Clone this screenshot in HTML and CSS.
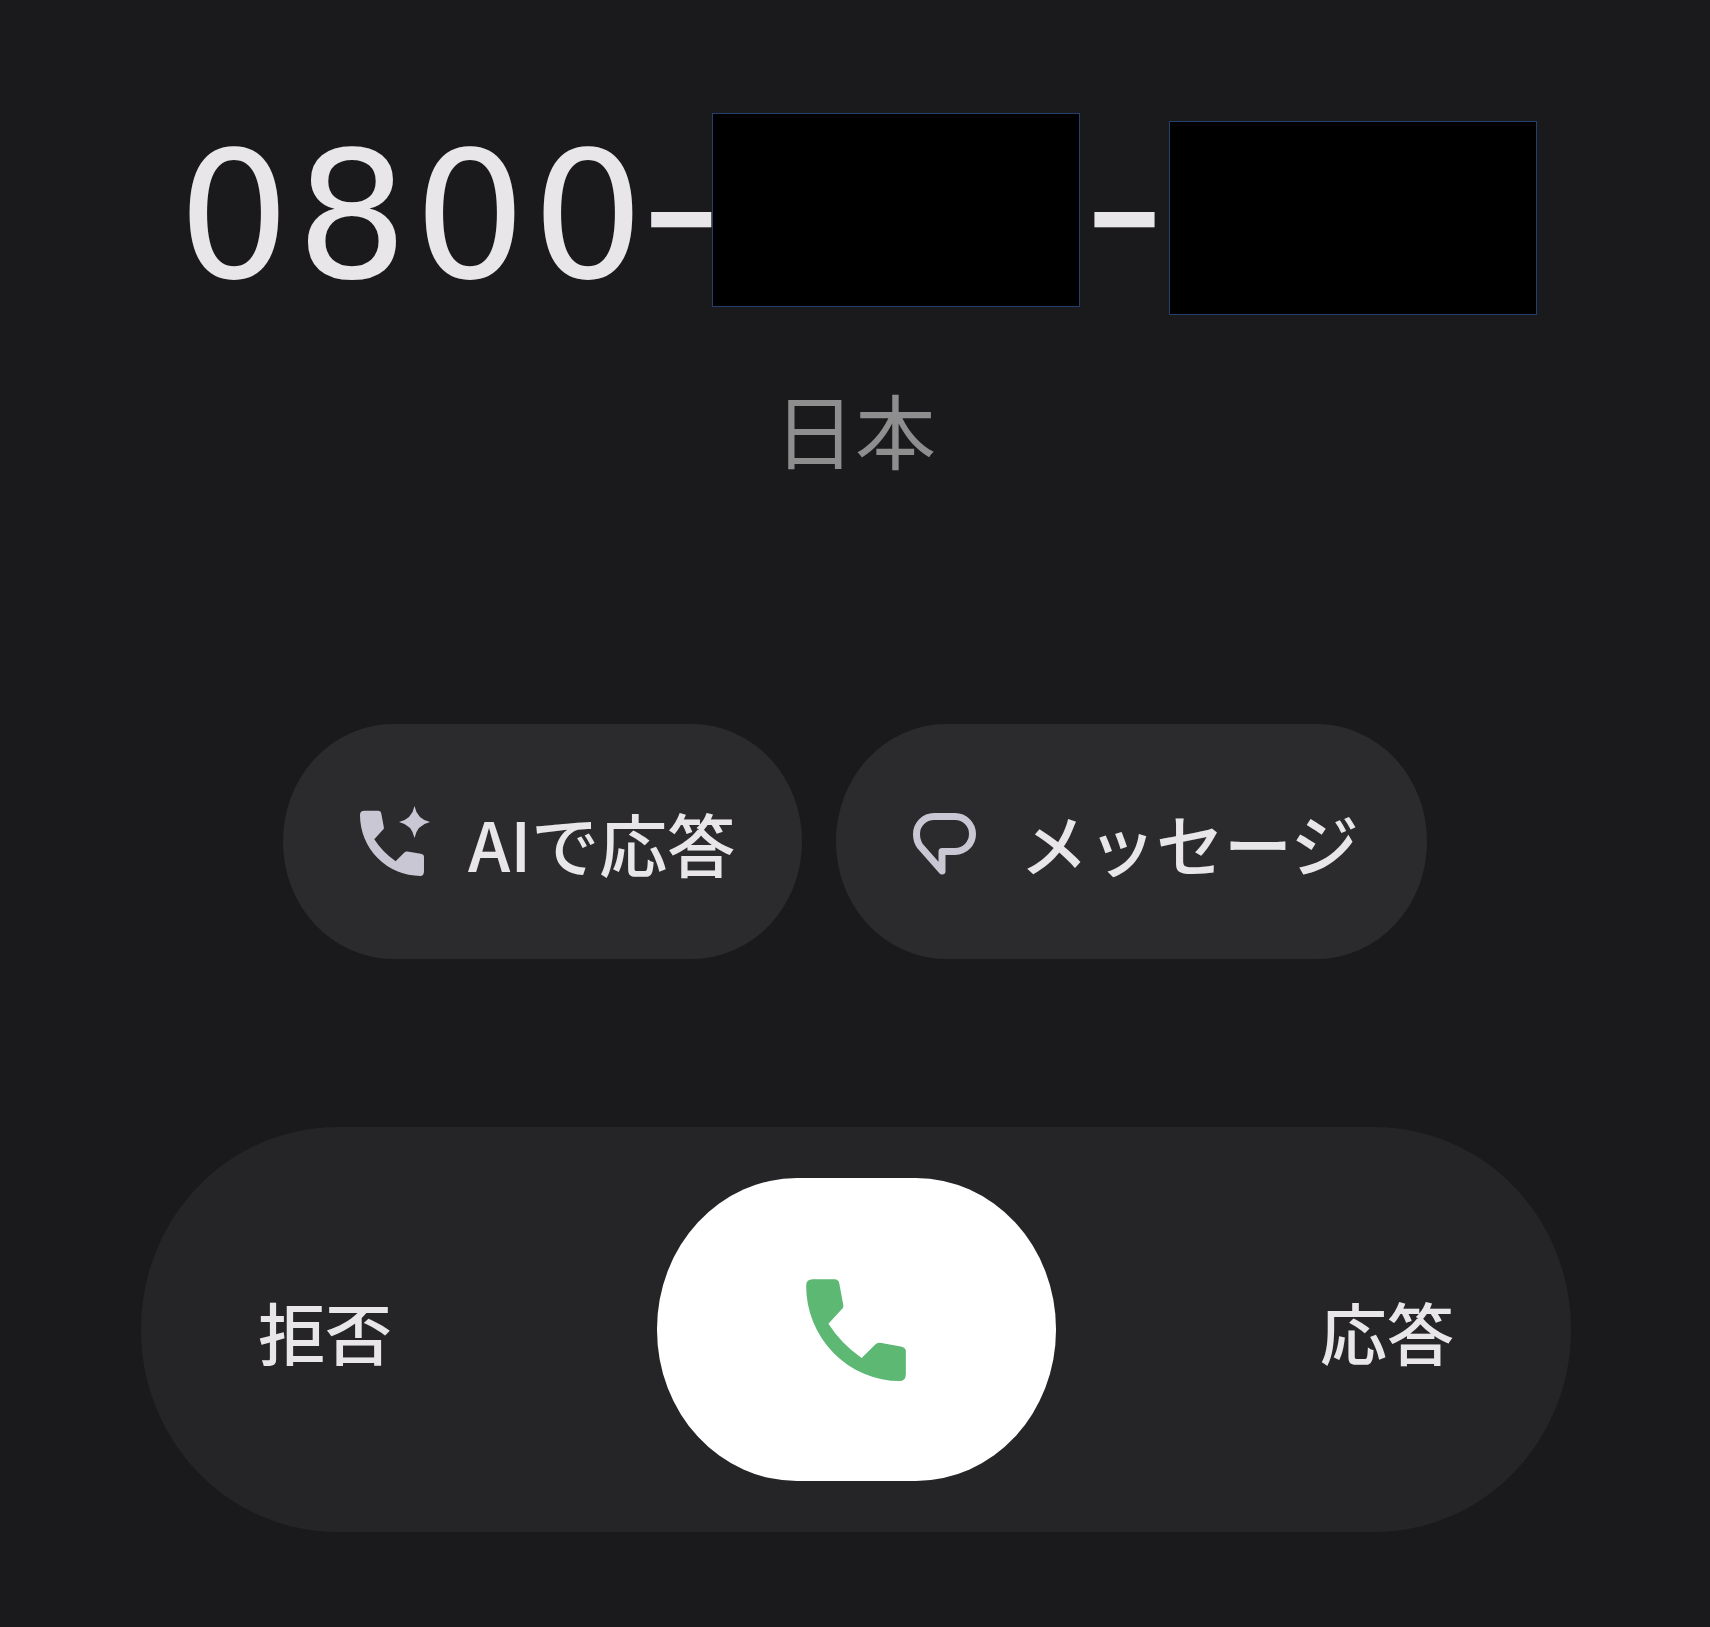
FILE: index.html
```html
<!DOCTYPE html>
<html lang="ja">

<head>
    <meta charset="UTF-8">
    <title>着信</title>
    <link rel="stylesheet" href="styles.css">
</head>

<body>
    <div id="caller">
        <div id="number">
            <span class="digits">080<span class="tight">0</span><span class="dash">-</span></span>
            <div class="redact"></div>
            <span class="dash dash-second">-</span>
            <div class="redact low"></div>
        </div>
        <div id="region">日本</div>
    </div>

    <div id="actions">
        <button class="chip chip-ai">
            <svg class="icon-ai" viewBox="0 0 70 72">
                <path transform="translate(0 4.5) scale(0.2133)" d="M0 20Q0 1 20 1L85 1Q98 1 100 15L112 80Q113 87 105 93L67 135Q105 195 167 238L208 197Q214 191 222 192L285 203Q300 206 300 217V285Q300 307 283 307A283 286 0 0 1 0 20Z" />
                <path d="M54.5 0Q57 13 70 16Q57 19 54.5 32Q52 19 39 16Q52 13 54.5 0Z" />
            </svg>
            <span class="chip-text">AIで応答</span>
        </button>
        <button class="chip chip-msg">
            <svg class="icon-msg" viewBox="0 0 63 62">
                <path d="M21 3.5H42A17.5 17.5 0 0 1 42 38.5H29V58L7 33Q3.5 28 3.5 21A17.5 17.5 0 0 1 21 3.5Z" />
            </svg>
            <span class="chip-text">メッセージ</span>
        </button>
    </div>

    <div id="slider">
        <span class="side">拒否</span>
        <div id="thumb">
            <svg class="icon-call" viewBox="0 0 300 307">
                <path d="M0 20Q0 1 20 1L85 1Q98 1 100 15L112 80Q113 87 105 93L67 135Q105 195 167 238L208 197Q214 191 222 192L285 203Q300 206 300 217V285Q300 307 283 307A283 286 0 0 1 0 20Z" />
            </svg>
        </div>
        <span class="side">応答</span>
    </div>
</body>

</html>
```

FILE: styles.css
```css
body {
    margin: 0;
    height: 1627px;
    overflow: hidden;
    background-color: #1a1a1c;
    font-family: 'Noto Sans CJK JP', 'Noto Sans', sans-serif;
    color: #e8e6e9;
}

#caller {
    padding-top: 113px;
}

#number {
    display: flex;
    align-items: flex-start;
    padding-left: 178px;
    height: 202px;
}

.digits {
    width: 534px;
    white-space: nowrap;
    font-family: 'DejaVu Sans', sans-serif;
    font-size: 176px;
    line-height: 204px;
    letter-spacing: 6px;
}

.tight {
    letter-spacing: -6px;
}

.dash {
    font-family: 'Inter', sans-serif;
    font-size: 188px;
    line-height: 194px;
    letter-spacing: 0;
}

.dash-second {
    width: 89px;
    text-align: center;
}

.redact {
    width: 366px;
    height: 192px;
    background-color: #000;
    border: 1px solid #23406f;
}

.low {
    margin-top: 8px;
}

#region {
    margin-top: 58px;
    text-align: center;
    font-size: 81px;
    line-height: 110px;
    color: #8e8e8e;
}

#actions {
    display: flex;
    justify-content: center;
    gap: 34px;
    margin-top: 241px;
}

.chip {
    display: flex;
    align-items: center;
    height: 235px;
    padding: 0;
    border: none;
    border-radius: 110px / 117px;
    background-color: #2b2b2d;
    color: #e8e6e9;
    font-family: inherit;
    font-size: 68px;
    font-weight: 500;
}

.chip-text {
    padding-top: 2px;
}

.chip-ai {
    width: 519px;
    padding-left: 77px;
}

.chip-msg {
    width: 591px;
    padding-left: 77px;
}

.icon-ai {
    width: 70px;
    height: 72px;
    margin-right: 38px;
    fill: #c9c7d3;
}

.icon-msg {
    width: 63px;
    height: 62px;
    margin-top: 4px;
    margin-right: 44px;
    fill: none;
    stroke: #c9c7d3;
    stroke-width: 7;
    stroke-linejoin: round;
}

#slider {
    display: flex;
    align-items: center;
    justify-content: space-between;
    width: 1430px;
    height: 405px;
    margin: 168px 0 0 141px;
    padding: 0 117px;
    box-sizing: border-box;
    border-radius: 196px / 202px;
    background-color: #252527;
}

.side {
    font-size: 67px;
    font-weight: 500;
    line-height: 80px;
    padding-top: 2px;
}

#thumb {
    display: flex;
    align-items: center;
    justify-content: center;
    width: 399px;
    height: 303px;
    border-radius: 140px / 151px;
    background-color: #fff;
}

.icon-call {
    width: 100px;
    height: 102px;
    fill: #5cb873;
}
```
